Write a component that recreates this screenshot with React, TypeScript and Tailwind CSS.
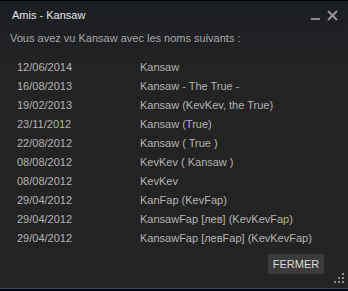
import React from 'react';

const names: [string, string][] = [
  ['12/06/2014', 'Kansaw'],
  ['16/08/2013', 'Kansaw - The True -'],
  ['19/02/2013', 'Kansaw (KevKev, the True)'],
  ['23/11/2012', 'Kansaw (True)'],
  ['22/08/2012', 'Kansaw ( True )'],
  ['08/08/2012', 'KevKev ( Kansaw )'],
  ['08/08/2012', 'KevKev'],
  ['29/04/2012', 'KanFap (KevFap)'],
  ['29/04/2012', 'KansawFap [лев] (KevKevFap)'],
  ['29/04/2012', 'KansawFap [левFap] (KevKevFap)'],
];

function Grip() {
  return (
    <svg width="12" height="12" viewBox="0 0 12 12" className="absolute bottom-[3px] right-[2px]">
      <rect x="8" y="0" width="2" height="2" fill="#8a8a8a" />
      <rect x="4" y="4" width="2" height="2" fill="#8a8a8a" />
      <rect x="8" y="4" width="2" height="2" fill="#8a8a8a" />
      <rect x="0" y="8" width="2" height="2" fill="#8a8a8a" />
      <rect x="4" y="8" width="2" height="2" fill="#8a8a8a" />
      <rect x="8" y="8" width="2" height="2" fill="#8a8a8a" />
    </svg>
  );
}

export default function App() {
  return (
    <div
      className="flex h-[291px] w-[348px] flex-col bg-black pt-px text-[11px]"
      style={{ fontFamily: '"Liberation Sans", Arial, sans-serif' }}
    >
      <div className="relative flex flex-1 flex-col border-b border-[#2a4a78] bg-gradient-to-b from-[#1b1e24] via-[#232323] via-[25%] to-[#232323]">
        <div className="flex h-[28px] items-center justify-between pl-3 pr-[10px]">
          <span className="text-[#e6e6e6]">Amis - Kansaw</span>
          <div className="flex items-end gap-[6px]">
            <svg width="10" height="12" viewBox="0 0 10 12">
              <rect x="0" y="9" width="9" height="2" fill="#8c8c8c" />
            </svg>
            <svg width="11" height="11" viewBox="0 0 11 11">
              <path d="M1 1 L10 10 M10 1 L1 10" stroke="#9a9a9a" strokeWidth="1.8" />
            </svg>
          </div>
        </div>
        <p className="pl-[10px] leading-[18px] text-[#a8a8a8]">Vous avez vu Kansaw avec les noms suivants :</p>
        <ul className="mt-[11px] flex flex-col">
          {names.map(([date, name], i) => (
            <li key={i} className="flex h-[19px] items-center pl-[17px] text-[#b4b4b4]">
              <span className="w-[123px]">{date}</span>
              <span>{name}</span>
            </li>
          ))}
        </ul>
        <div className="mt-[6px] flex justify-end pr-[24px]">
          <button className="h-[20px] w-[56px] bg-[#3b3b3b] text-[11px] text-[#dcdcdc]">FERMER</button>
        </div>
        <Grip />
      </div>
      <div className="h-[2px]" />
    </div>
  );
}
